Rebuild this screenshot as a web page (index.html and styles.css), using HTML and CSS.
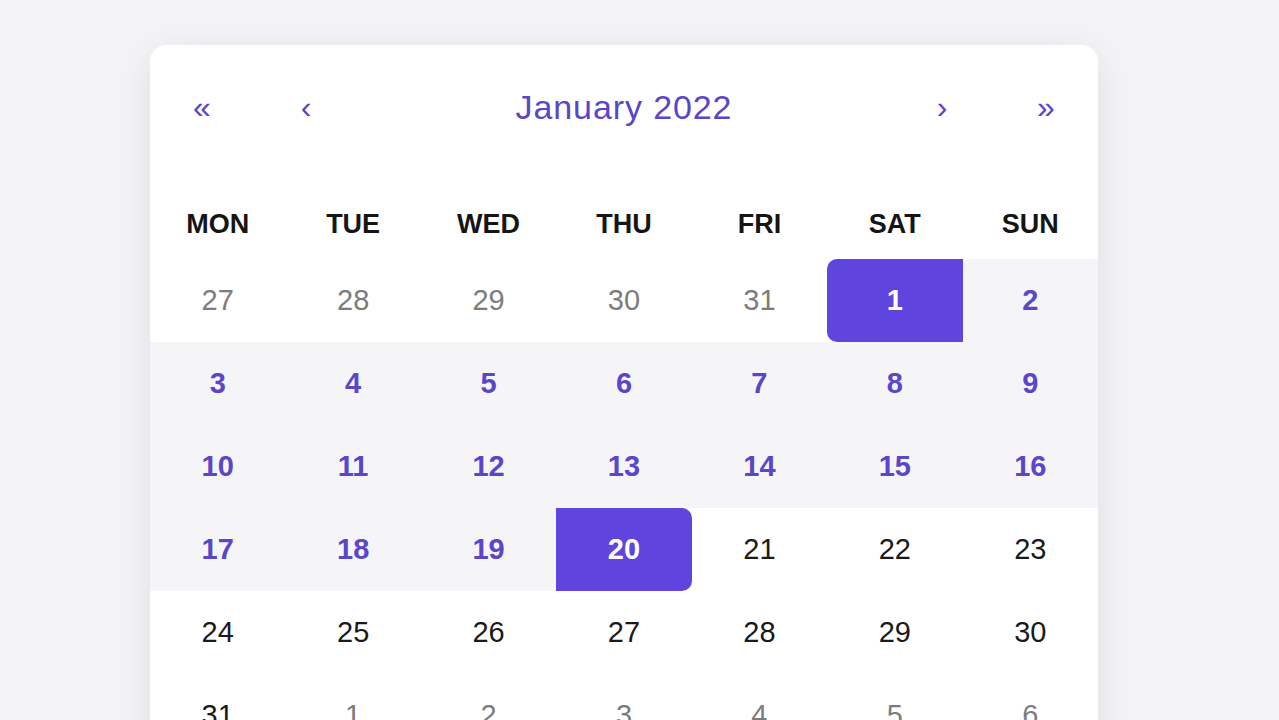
FILE: index.html
```html
<!DOCTYPE html>
<html lang="en">
<head>
    <meta charset="UTF-8">
    <meta name="viewport" content="width=device-width, initial-scale=1.0">
    <title>Calendar</title>
    <link rel="stylesheet" href="styles.css">
</head>
<body>
    <div class="calendar">
        <div class="nav">
            <button class="nav-btn">«</button>
            <button class="nav-btn">‹</button>
            <button class="nav-label">January 2022</button>
            <button class="nav-btn">›</button>
            <button class="nav-btn">»</button>
        </div>
        <div class="weekdays">
            <div>MON</div>
            <div>TUE</div>
            <div>WED</div>
            <div>THU</div>
            <div>FRI</div>
            <div>SAT</div>
            <div>SUN</div>
        </div>
        <div class="days">
            <button class="day other">27</button>
            <button class="day other">28</button>
            <button class="day other">29</button>
            <button class="day other">30</button>
            <button class="day other">31</button>
            <button class="day range-start">1</button>
            <button class="day range">2</button>

            <button class="day range">3</button>
            <button class="day range">4</button>
            <button class="day range">5</button>
            <button class="day range">6</button>
            <button class="day range">7</button>
            <button class="day range">8</button>
            <button class="day range">9</button>

            <button class="day range">10</button>
            <button class="day range">11</button>
            <button class="day range">12</button>
            <button class="day range">13</button>
            <button class="day range">14</button>
            <button class="day range">15</button>
            <button class="day range">16</button>

            <button class="day range">17</button>
            <button class="day range">18</button>
            <button class="day range">19</button>
            <button class="day range-end">20</button>
            <button class="day">21</button>
            <button class="day">22</button>
            <button class="day">23</button>

            <button class="day">24</button>
            <button class="day">25</button>
            <button class="day">26</button>
            <button class="day">27</button>
            <button class="day">28</button>
            <button class="day">29</button>
            <button class="day">30</button>

            <button class="day">31</button>
            <button class="day other">1</button>
            <button class="day other">2</button>
            <button class="day other">3</button>
            <button class="day other">4</button>
            <button class="day other">5</button>
            <button class="day other">6</button>
        </div>
    </div>
</body>
</html>
```

FILE: styles.css
```css
*{margin: 0;padding: 0;box-sizing: border-box;}
html,body{
    height: 100%;
}
body{
    background: #f4f4f6;
    font-family: "Liberation Sans", Arial, sans-serif;
    overflow: hidden;
}
button{
    border: none;
    background: none;
    font-family: inherit;
    cursor: pointer;
}
.calendar{
    width: 948px;
    margin: 45px 0 0 150px;
    padding-top: 30px;
    background: #ffffff;
    border-radius: 16px;
    box-shadow: 0 8px 40px rgba(0, 0, 0, 0.09);
    min-height: 720px;
}
.nav{
    display: flex;
    height: 64px;
}
.nav-btn{
    width: 104px;
    font-size: 32px;
    color: #5a46c8;
}
.nav-label{
    flex-grow: 1;
    font-size: 34px;
    letter-spacing: 0.9px;
    color: #5a46c8;
}
.weekdays{
    display: grid;
    grid-template-columns: repeat(7, 1fr);
    margin-top: 49px;
    height: 71px;
    align-items: start;
    padding-top: 21px;
}
.weekdays div{
    text-align: center;
    font-size: 27px;
    font-weight: bold;
    color: #151515;
}
.days{
    display: grid;
    grid-template-columns: repeat(7, 1fr);
    grid-auto-rows: 83px;
}
.day{
    font-size: 29px;
    color: #1a1a1a;
}
.day.other{
    color: #7c7c7c;
}
.range{
    background: #f5f5f8;
    color: #5a46c8;
    font-weight: bold;
}
.range-start,
.range-end{
    background: #5f45dd;
    color: #ffffff;
    font-weight: bold;
}
.range-start{
    border-radius: 10px 0 0 10px;
}
.range-end{
    border-radius: 0 10px 10px 0;
}
```
